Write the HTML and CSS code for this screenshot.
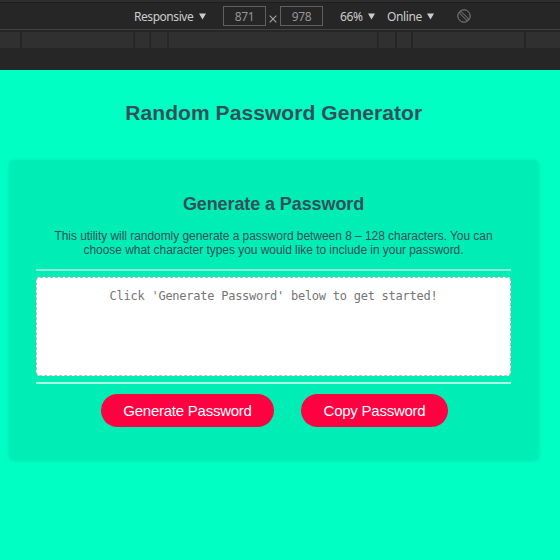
FILE: index.html
```
<!DOCTYPE html>
<html lang="en">
<head>
<meta charset="utf-8">
<title>Random Password Generator</title>
<link rel="stylesheet" href="styles.css">
</head>
<body>
<div class="toolbar">
  <span class="label device">Responsive</span>
  <svg class="arrow" viewBox="0 0 8 7"><path d="M0 0h8L4 7z"/></svg>
  <span class="size width">871</span>
  <svg class="times" viewBox="0 0 8 8"><path d="M.7.7l6.6 6.6M7.3.7L.7 7.3"/></svg>
  <span class="size height">978</span>
  <span class="label zoom">66%</span>
  <svg class="arrow" viewBox="0 0 8 7"><path d="M0 0h8L4 7z"/></svg>
  <span class="label network">Online</span>
  <svg class="arrow" viewBox="0 0 8 7"><path d="M0 0h8L4 7z"/></svg>
  <svg class="rotate" viewBox="0 0 14 14"><circle cx="7" cy="7" r="6.2"/><path d="M2.4 4L4 2.4L11.6 10L10 11.6z"/></svg>
</div>
<div class="ruler"><i></i><i></i><i></i><i></i><i></i><i></i><i></i><i></i><i></i></div>
<main class="page">
  <h1>Random Password Generator</h1>
  <section class="card">
    <h2>Generate a Password</h2>
    <p><span class="line">This utility will randomly generate a password between 8 – 128 characters. You can</span> <span class="line">choose what character types you would like to include in your password.</span></p>
    <hr class="rule">
    <textarea class="output" placeholder="Click 'Generate Password' below to get started!" readonly></textarea>
    <hr class="rule thin">
    <div class="actions">
      <button class="generate">Generate Password</button>
      <button class="copy">Copy Password</button>
    </div>
  </section>
</main>
</body>
</html>
```
FILE: styles.css
```
* { box-sizing: border-box; }
body {
  margin: 0;
  width: 560px;
  height: 560px;
  overflow: hidden;
  background: #00ffc3;
  font-family: "Liberation Sans", Arial, sans-serif;
  color: #36505a;
}
.toolbar {
  display: flex;
  align-items: center;
  height: 30px;
  padding: 3px 0 0 134px;
  background: linear-gradient(#2e2e2e 2px, #1e1e1e 2px, #1e1e1e 3px, #262626 3px);
  border-bottom: 1px solid #414141;
  font: 12px/26px "Noto Sans", sans-serif;
  color: #ccc;
}
.label { flex: none; padding-top: 2px; white-space: nowrap; }
.device { width: 65px; letter-spacing: -.45px; }
.arrow { flex: none; width: 7px; height: 7px; fill: #ccc; }
.size {
  flex: none;
  height: 20px;
  border: 1px solid #606060;
  line-height: 19px;
  text-align: center;
  color: #959595;
}
.width { width: 43px; margin-left: 17px; letter-spacing: -.3px; }
.height { width: 43px; letter-spacing: -.3px; }
.times { flex: none; width: 8px; height: 8px; margin: 5px 3px 0; stroke: #a0a0a0; stroke-width: 1.2; }
.zoom { width: 28px; margin-left: 17px; letter-spacing: -.4px; }
.network { width: 40px; margin-left: 12px; letter-spacing: -.4px; }
.rotate { flex: none; width: 14px; height: 14px; margin-left: 23px; fill: none; stroke: #858585; }
.ruler {
  display: grid;
  grid-template-columns: 20px 111px 14px 16px 208px 16px 14px 111px 34px;
  column-gap: 2px;
  height: 40px;
  padding: 2px 0 22px;
  background: #262626;
}
.ruler i { background: #303030; }
.page { padding: 30px 22px 0 9.5px; }
h1 {
  margin: 0 0 34px;
  font-size: 21px;
  line-height: 26px;
  letter-spacing: .07px;
  text-align: center;
  white-space: nowrap;
}
.card {
  height: 299px;
  padding: 32px 27px 0 26.5px;
  border-radius: 4px;
  background: #00edb5;
  box-shadow: 0 1px 4px rgba(0, 120, 90, .25);
}
h2 {
  margin: 0;
  font-size: 18px;
  line-height: 24px;
  letter-spacing: -.1px;
  text-align: center;
}
p {
  margin: 13px 0 12px;
  font-size: 12px;
  line-height: 14px;
  letter-spacing: -.05px;
  text-align: center;
  white-space: nowrap;
}
.line { display: block; }
.rule { height: 2px; margin: 0 0 6px; border: 0; background: #8cf0d8; }
.output {
  display: block;
  width: 100%;
  height: 99px;
  padding: 11px 0;
  border: 1px dashed #bbb;
  border-radius: 4px;
  outline: 0;
  resize: none;
  background: #fff;
  font: 12px/15px "DejaVu Sans Mono", monospace;
  letter-spacing: -.25px;
  text-align: center;
}
.output::placeholder { color: #757575; opacity: 1; }
.thin { margin: 6px 0 10px; background: #b0f4e2; }
.actions { display: flex; justify-content: center; gap: 27px; padding-left: 2px; }
button {
  height: 33px;
  padding: 0;
  border: 0;
  border-radius: 17px;
  background: #ff0040;
  color: #fff;
  font: 15px/33px "Liberation Sans", Arial, sans-serif;
  letter-spacing: -.25px;
}
.generate { width: 173px; }
.copy { width: 147px; }
```
